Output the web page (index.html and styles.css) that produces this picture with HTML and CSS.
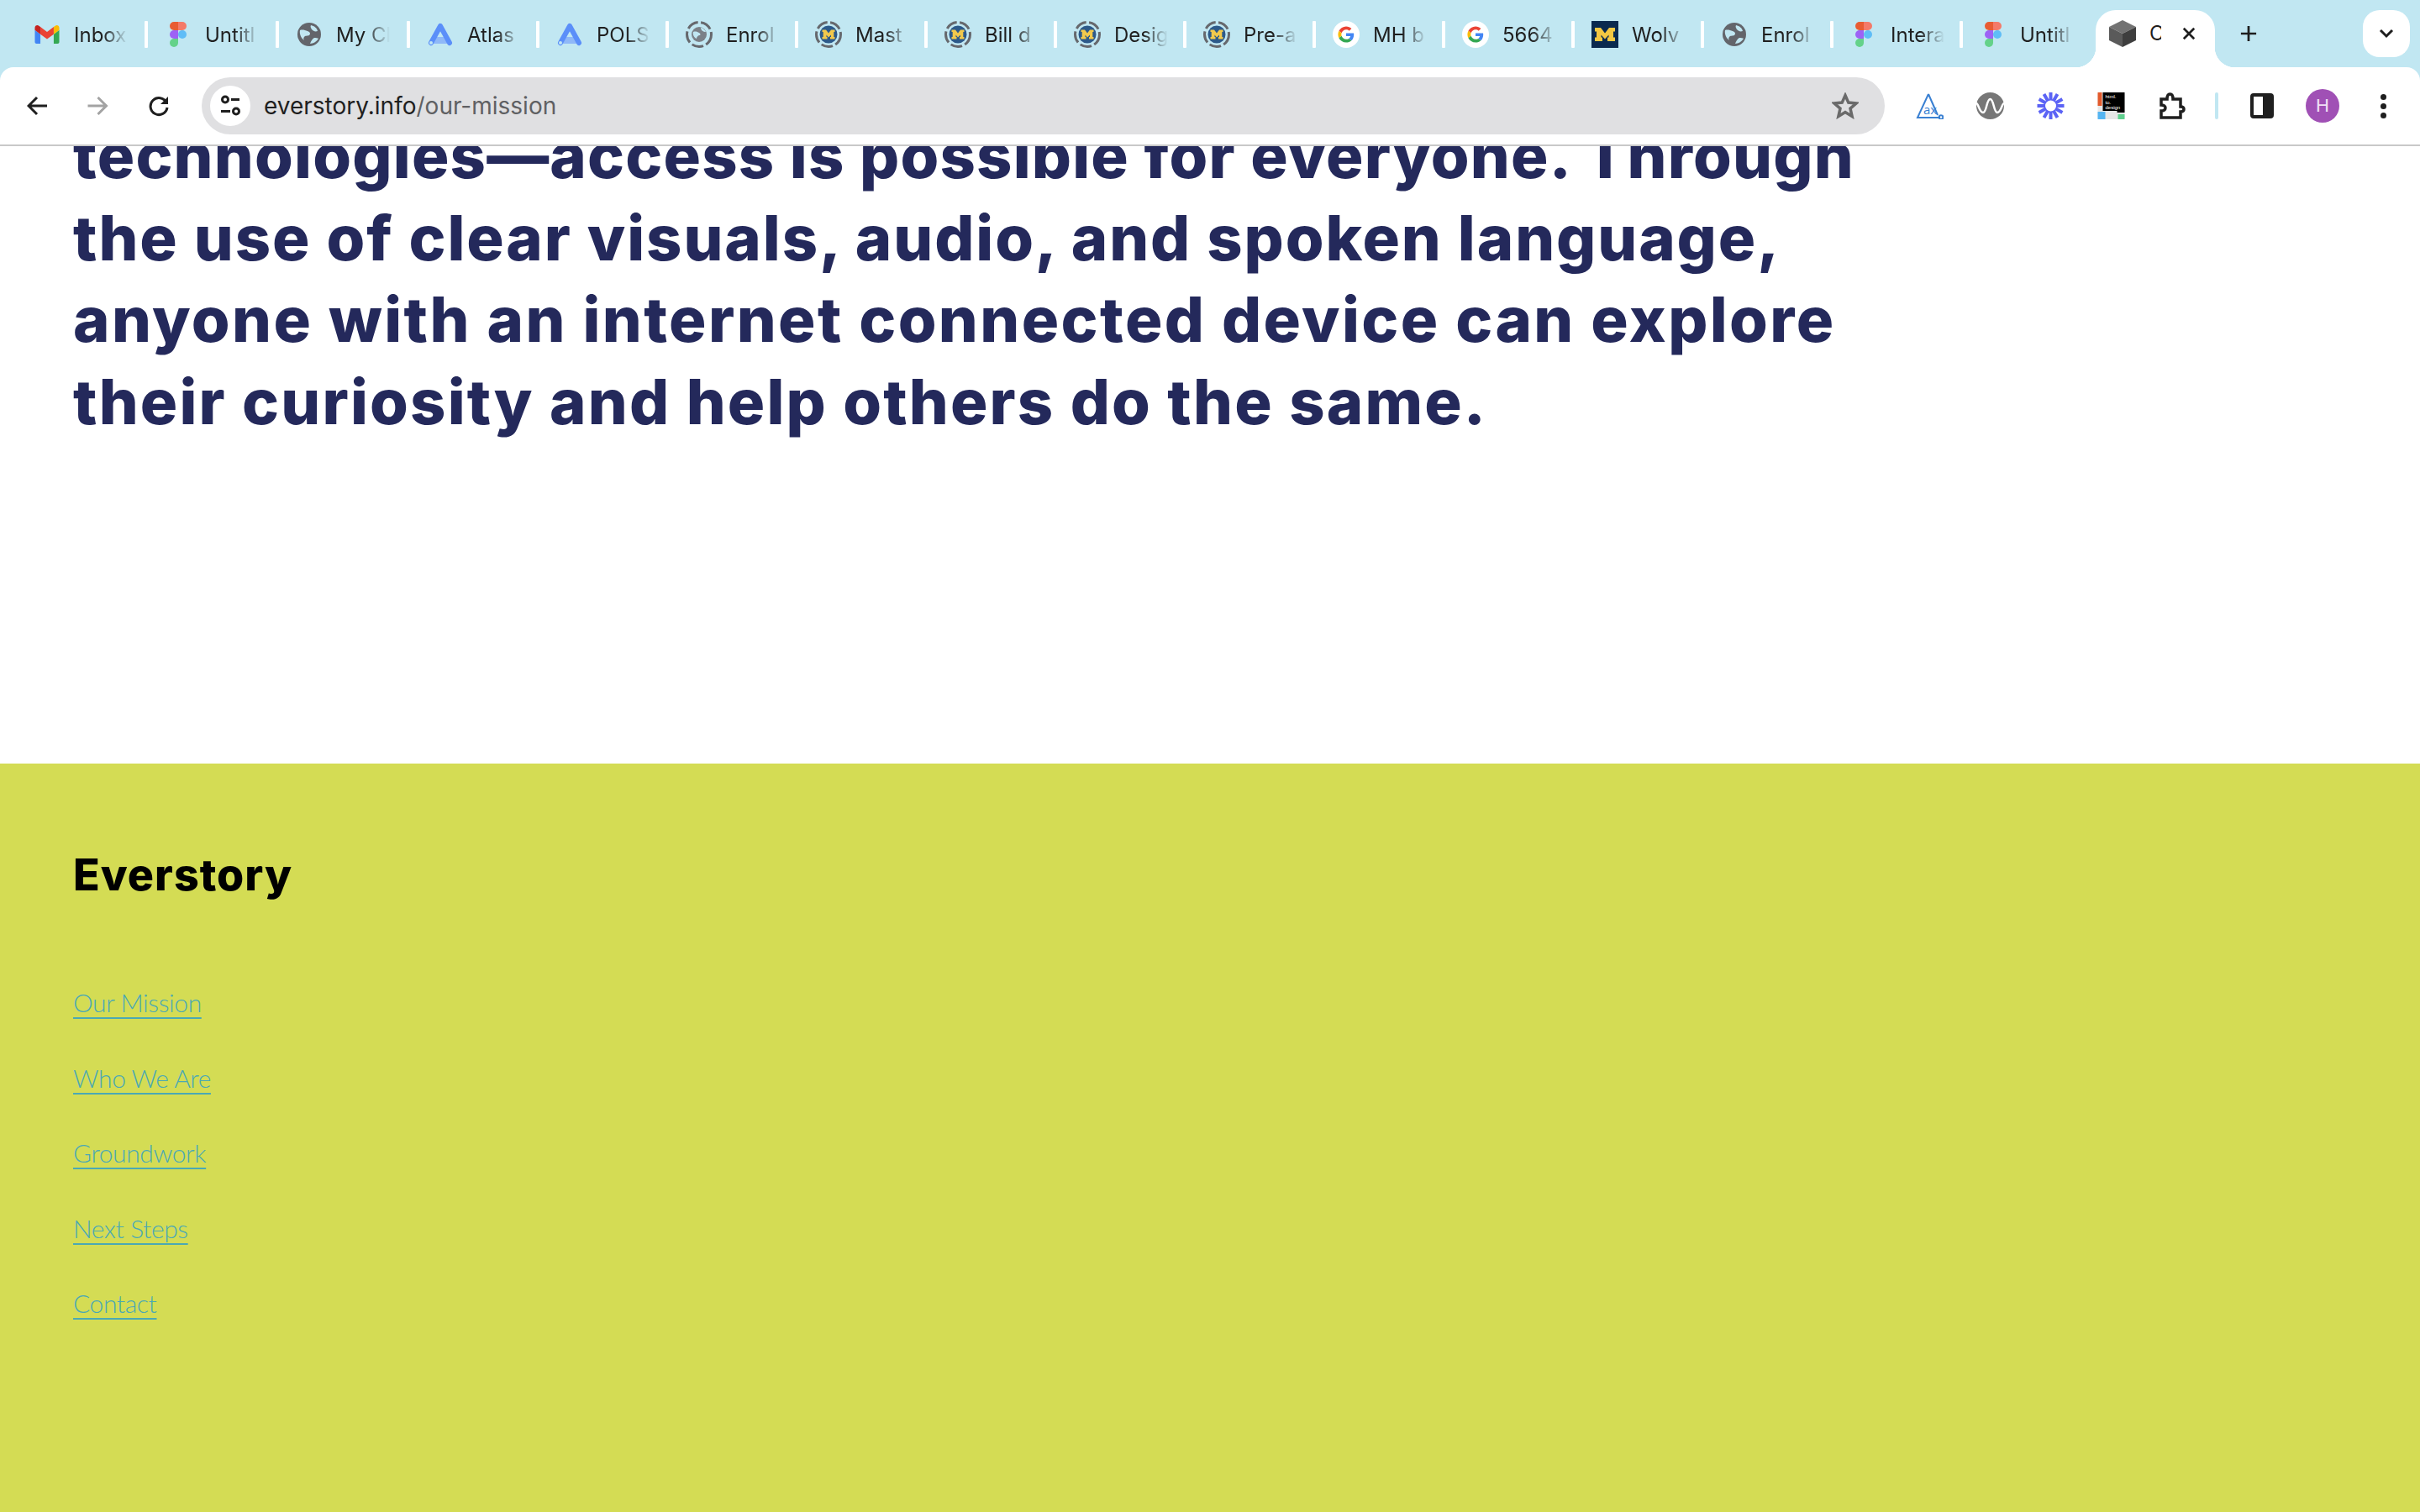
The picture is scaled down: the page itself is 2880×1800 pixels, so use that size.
FILE: index.html
```html
<!DOCTYPE html>
<html lang="en">
<head>
  <meta charset="UTF-8" />
  <title>Our Mission</title>
  <link rel="stylesheet" href="styles.css">
</head>
<body>

  <!-- shared favicons -->
  <svg class="defs" width="0" height="0">
    <symbol id="i-gmail" viewBox="47.500 26.500 97 97">
      <path fill="#4285f4" d="M58 108h14V74L52 59v43c0 3.32 2.69 6 6 6"/>
      <path fill="#34a853" d="M120 108h14c3.32 0 6-2.69 6-6V59l-20 15"/>
      <path fill="#fbbc04" d="M120 48v26l20-15v-8c0-7.42-8.47-11.65-14.4-7.2"/>
      <path fill="#ea4335" d="M72 74V48l24 18 24-18v26L96 92"/>
      <path fill="#c5221f" d="M52 51v8l20 15V48l-5.6-4.2c-5.94-4.45-14.4-.22-14.4 7.2"/>
    </symbol>
    <symbol id="i-figma" viewBox="-6 -1 32 32">
      <path fill="#64d28a" d="M5 30a5 5 0 0 0 5-5v-5H5a5 5 0 0 0 0 10z"/>
      <path fill="#9d62f5" d="M0 15a5 5 0 0 1 5-5h5v10H5a5 5 0 0 1-5-5z"/>
      <path fill="#e85c33" d="M0 5a5 5 0 0 1 5-5h5v10H5a5 5 0 0 1-5-5z"/>
      <path fill="#f47a69" d="M10 0h5a5 5 0 0 1 0 10h-5z"/>
      <circle fill="#5fbdf7" cx="15" cy="15" r="5"/>
    </symbol>
    <symbol id="i-globe" viewBox="-2 -2 32 32">
      <circle cx="14" cy="14" r="14" fill="#63656b"/>
      <path fill="#c1e7f2" d="M3 9c3-1 6 0 9 1 3 1 4 3 2 5-2 1-5 0-6 2-1 1-1 3 0 4-3-2-6-7-5-12z"/>
      <path fill="#c1e7f2" d="M16 3c4 1 7 3 8 7-3 1-5 0-7-2-1-2-2-3-1-5z"/>
      <path fill="#c1e7f2" d="M15 25c1-3 3-6 5-7 2 0 4 0 5 1-2 3-6 6-10 6z"/>
    </symbol>
    <symbol id="i-atlas" viewBox="-1 -1 32 32">
      <path fill="#8fb8f8" d="M6 18h18l4 8H2z"/>
      <path fill="none" stroke="#5b8ff9" stroke-width="6" stroke-linecap="round" stroke-linejoin="round" d="M4 25 15 5l11 20"/>
      <circle cx="4" cy="25" r="2" fill="#c1e7f2"/>
    </symbol>
    <symbol id="i-ring-globe" viewBox="0 0 32 32">
      <circle cx="16" cy="16" r="14.5" fill="none" stroke="#66686d" stroke-width="3" stroke-dasharray="14 3.5"/>
      <circle cx="16" cy="16" r="9" fill="#7b8087"/>
      <path fill="#c1e7f2" d="M9 13c3-1 5 0 7 1 2 1 2 3 0 3-2 1-3 2-3 4-3-1-5-5-4-8zM18 8c2 0 5 2 6 5-3 0-6-2-6-5z"/>
    </symbol>
    <symbol id="i-ring-m" viewBox="0 0 32 32">
      <circle cx="16" cy="16" r="14.5" fill="none" stroke="#66686d" stroke-width="3" stroke-dasharray="14 3.5"/>
      <circle cx="16" cy="16" r="10.5" fill="#2d5a8a"/>
      <path fill="#f2c94c" d="M8.5 10.5h4.5l3 4 3-4h4.500v2.500h-1.200v6h1.200v2.500h-5.500V19h1v-2.500L16 19.500l-2.500-3V19h1v2.500H8.500V19h1.200v-6H8.500z"/>
    </symbol>
    <symbol id="i-google" viewBox="-16 -16 80 80">
      <circle cx="24" cy="24" r="40" fill="#fff"/>
      <path fill="#EA4335" d="M24 9.5c3.54 0 6.71 1.22 9.21 3.6l6.85-6.85C35.9 2.38 30.47 0 24 0 14.62 0 6.51 5.38 2.56 13.22l7.98 6.19C12.43 13.72 17.74 9.5 24 9.5z"/>
      <path fill="#4285F4" d="M46.98 24.55c0-1.57-.15-3.09-.38-4.55H24v9.02h12.94c-.58 2.96-2.26 5.48-4.78 7.18l7.73 6c4.51-4.18 7.09-10.36 7.09-17.65z"/>
      <path fill="#FBBC05" d="M10.53 28.59c-.48-1.45-.76-2.99-.76-4.59s.27-3.14.76-4.59l-7.98-6.19C.92 16.46 0 20.12 0 24c0 3.88.92 7.54 2.56 10.78l7.97-6.19z"/>
      <path fill="#34A853" d="M24 48c6.48 0 11.93-2.13 15.89-5.81l-7.73-6c-2.15 1.45-4.92 2.3-8.16 2.3-6.26 0-11.57-4.22-13.47-9.91l-7.98 6.19C6.51 42.62 14.62 48 24 48z"/>
    </symbol>
    <symbol id="i-wolv" viewBox="0 0 32 32">
      <rect width="32" height="32" fill="#0b2a4f"/>
      <path fill="#f5c842" d="M4 8h7l5 6.500L21 8h7v4.500h-2v7h2V24h-9v-4.500h1.500v-3L16 21.500l-4.500-5v3H13V24H4v-4.500h2v-7H4z"/>
    </symbol>
    <symbol id="i-cube" viewBox="0 0 32 32">
      <path fill="#727272" d="M16 0 32 8 16 16 0 8z"/>
      <path fill="#5a5a5a" d="M0 8l16 8v16L0 24z"/>
      <path fill="#3e3e3e" d="M32 8 16 16v16l16-8z"/>
    </symbol>
  </svg>

  <div class="tabstrip">
    <div class="tab"><svg class="favicon"><use href="#i-gmail"/></svg><span class="tab-label">Inbox</span></div>
    <div class="tab wide"><svg class="favicon"><use href="#i-figma"/></svg><span class="tab-label">Untitl</span></div>
    <div class="tab wide"><svg class="favicon"><use href="#i-globe"/></svg><span class="tab-label">My Cl</span></div>
    <div class="tab"><svg class="favicon"><use href="#i-atlas"/></svg><span class="tab-label">Atlas</span></div>
    <div class="tab"><svg class="favicon"><use href="#i-atlas"/></svg><span class="tab-label">POLS</span></div>
    <div class="tab"><svg class="favicon"><use href="#i-ring-globe"/></svg><span class="tab-label">Enrol</span></div>
    <div class="tab"><svg class="favicon"><use href="#i-ring-m"/></svg><span class="tab-label">Mast</span></div>
    <div class="tab"><svg class="favicon"><use href="#i-ring-m"/></svg><span class="tab-label">Bill d</span></div>
    <div class="tab"><svg class="favicon"><use href="#i-ring-m"/></svg><span class="tab-label">Desig</span></div>
    <div class="tab"><svg class="favicon"><use href="#i-ring-m"/></svg><span class="tab-label">Pre-a</span></div>
    <div class="tab"><svg class="favicon"><use href="#i-google"/></svg><span class="tab-label">MH b</span></div>
    <div class="tab"><svg class="favicon"><use href="#i-google"/></svg><span class="tab-label">5664</span></div>
    <div class="tab"><svg class="favicon"><use href="#i-wolv"/></svg><span class="tab-label">Wolv</span></div>
    <div class="tab"><svg class="favicon"><use href="#i-globe"/></svg><span class="tab-label">Enrol</span></div>
    <div class="tab"><svg class="favicon"><use href="#i-figma"/></svg><span class="tab-label">Intera</span></div>
    <div class="tab"><svg class="favicon"><use href="#i-figma"/></svg><span class="tab-label">Untitl</span></div>
    <div class="tab-active">
      <svg class="favicon"><use href="#i-cube"/></svg>
      <span class="tab-label-active">C</span>
      <svg class="tab-close" viewBox="0 0 18 18"><path d="M2 2l14 14M16 2 2 16"/></svg>
    </div>
    <svg class="new-tab" viewBox="0 0 22 22"><path d="M11 1v20M1 11h20"/></svg>
    <div class="tab-search"><svg viewBox="0 0 18 12"><path d="M2 2l7 7 7-7"/></svg></div>
  </div>

  <div class="toolbar">
    <button class="tool"><svg class="stroke-dark" viewBox="0 0 26 26"><path d="M24 13H3M12 3 2 13l10 10"/></svg></button>
    <button class="tool"><svg class="stroke-grey" viewBox="0 0 26 26"><path d="M0.500 13h21M12.500 3l10 10-10 10"/></svg></button>
    <button class="tool"><svg class="stroke-dark" viewBox="0 0 26 26"><path d="M22 9a10 10 0 1 0 1 6"/><path class="solid" d="M24 2v9h-9z"/></svg></button>

    <div class="omnibox">
      <span class="site-chip">
        <svg viewBox="0 0 26 26"><circle cx="7" cy="5.500" r="3.500"/><path d="M14 5.500h10M2 19.500h11"/><circle cx="20" cy="19.500" r="3.500"/></svg>
      </span>
      <span class="url"><span class="url-host">everstory.info</span>/our-mission</span>
      <svg class="bookmark" viewBox="0 0 32 32"><path d="M16 3.500l3.800 8.600 9.200.9-7 6.200 2.100 9.300L16 23.500l-8.100 5 2.100-9.300-7-6.200 9.200-.9z"/></svg>
    </div>

    <button class="tool">
      <svg class="ext" viewBox="0 0 33 32">
        <path class="ax-tri" d="M15 2 2 30h27"/><path class="ax-tri" d="M15 2l11 25"/>
        <circle class="ax-tri" cx="30" cy="29.500" r="2.300"/>
        <text class="ax-text" x="9" y="26">ax</text>
      </svg>
    </button>
    <button class="tool">
      <svg class="ext" viewBox="0 0 33 32">
        <ellipse cx="16.500" cy="16" rx="16.500" ry="16" fill="#777"/>
        <path class="wave" d="M0 13c2.500 0 3.500 11 8 11s4-16 8.500-16 4 16 8.500 16 5.500-11 8-11"/>
      </svg>
    </button>
    <button class="tool">
      <svg class="ext" viewBox="0 0 32 32">
        <g class="burst"><path d="M16 0v32M0 16h32M2.100 8l27.800 16M8 2.100l16 27.800M24 2.100 8 29.900M29.900 8 2.100 24"/></g>
        <circle cx="16" cy="16" r="6.500" fill="#fff"/>
      </svg>
    </button>
    <button class="tool">
      <svg class="ext" viewBox="0 0 32 32">
        <rect width="32" height="32" rx="2" fill="#e6e6e6"/>
        <rect x="0" y="0" width="5" height="16" fill="#e35a2c"/>
        <rect x="0" y="23" width="9" height="9" fill="#55b5f2"/>
        <rect x="6" y="0" width="26" height="22" fill="#000"/>
        <rect x="24" y="26" width="8" height="6" fill="#5fd08e"/>
        <rect x="23" y="22" width="9" height="2" fill="#000"/>
        <text class="htd" x="9" y="7">html.</text>
        <text class="htd" x="9" y="13.500">to.</text>
        <text class="htd" x="9" y="20">design</text>
      </svg>
    </button>
    <button class="tool">
      <svg class="stroke-dark puzzle" viewBox="0 0 33 34"><path d="M4 9h7c0-4 1-6 3.500-6S18 5 18 9h9v9c3 0 4 1 4 3s-1 3-4 3v7H4v-8c3 0 5-1.500 5-3.500S7 16 4 16z"/></svg>
    </button>
    <span class="tool-sep"></span>
    <button class="tool">
      <svg class="panel" viewBox="0 0 28 30"><rect x="2" y="2" width="24" height="26" rx="2"/><path class="solid" d="M15 2h9a2 2 0 0 1 2 2v22a2 2 0 0 1-2 2h-9z"/></svg>
    </button>
    <button class="tool"><span class="avatar">H</span></button>
    <button class="tool"><span class="menu-dots"><i></i><i></i><i></i></span></button>
  </div>

  <main class="page">
    <h2 class="statement">
      <span class="line line-1">technologies—access is possible for everyone. Through</span>
      <span class="line line-2">the use of clear visuals, audio, and spoken language,</span>
      <span class="line line-3">anyone with an internet connected device can explore</span>
      <span class="line line-4">their curiosity and help others do the same.</span>
    </h2>
  </main>

  <footer class="site-footer">
    <div class="brand">Everstory</div>
    <nav class="footer-nav">
      <a href="#">Our Mission</a>
      <a href="#">Who We Are</a>
      <a href="#">Groundwork</a>
      <a href="#">Next Steps</a>
      <a href="#">Contact</a>
    </nav>
  </footer>

</body>
</html>
```

FILE: styles.css
```css
/* Global */
* {
  box-sizing: border-box;
}
html, body {
  margin: 0;
  padding: 0;
}
body {
  width: 2880px;
  height: 1800px;
  overflow: hidden;
  display: flex;
  flex-direction: column;
  background-color: #c1e7f2;
  font-family: Inter, "Liberation Sans", sans-serif;
  color: #1f1f1f;
}
.defs {
  position: absolute;
}

/* Tab strip */
.tabstrip {
  height: 80px;
  flex: none;
  display: flex;
  align-items: flex-start;
  padding-left: 22px;
}
.tab {
  width: 154px;
  height: 32px;
  margin-top: 25px;
  padding-left: 20px;
  display: flex;
  align-items: center;
  flex: none;
}
.tab.wide {
  width: 156px;
}
.tab:first-child {
  padding-left: 18px;
}
.tab::after {
  content: "";
  width: 4px;
  height: 32px;
  margin-left: auto;
  background-color: #fff;
  border-radius: 1px;
}
.tab:nth-child(16)::after {
  display: none;
}
.favicon {
  width: 32px;
  height: 32px;
  flex: none;
}
.tab-label {
  width: 64px;
  margin-left: 16px;
  font-size: 24px;
  white-space: nowrap;
  overflow: hidden;
  -webkit-mask-image: linear-gradient(to right, #000 55%, transparent 100%);
  mask-image: linear-gradient(to right, #000 55%, transparent 100%);
}

/* Active tab */
.tab-active {
  position: relative;
  width: 142px;
  height: 68px;
  margin-top: 12px;
  margin-left: 4px;
  padding: 12px 0 0 16px;
  display: flex;
  align-items: flex-start;
  flex: none;
  background-color: #fff;
  border-radius: 24px 24px 0 0;
}
.tab-active::before,
.tab-active::after {
  content: "";
  position: absolute;
  bottom: 0;
  width: 24px;
  height: 24px;
}
.tab-active::before {
  left: -24px;
  background: radial-gradient(circle at 0 0, #c1e7f2 24px, #fff 24.5px);
}
.tab-active::after {
  right: -24px;
  background: radial-gradient(circle at 100% 0, #c1e7f2 24px, #fff 24.5px);
}
.tab-label-active {
  width: 14px;
  margin-left: 16px;
  font-size: 24px;
  line-height: 32px;
  overflow: hidden;
}
.tab-close {
  width: 16px;
  height: 16px;
  margin: 8px 0 0 25px;
  fill: none;
  stroke: #1f1f1f;
  stroke-width: 3;
}
.new-tab {
  width: 20px;
  height: 20px;
  margin: 30px 0 0 30px;
  fill: none;
  stroke: #1f1f1f;
  stroke-width: 3;
}
.tab-search {
  width: 56px;
  height: 56px;
  margin: 12px 0 0 126px;
  display: flex;
  align-items: center;
  justify-content: center;
  background-color: #fff;
  border-radius: 20px;
}
.tab-search svg {
  width: 18px;
  height: 12px;
  fill: none;
  stroke: #1f1f1f;
  stroke-width: 3;
}

/* Toolbar */
.toolbar {
  height: 94px;
  flex: none;
  padding: 0 8px 0 8.5px;
  display: flex;
  align-items: center;
  background-color: #fff;
  border-bottom: 2px solid #c9c9c9;
  border-radius: 16px 16px 0 0;
}
.tool {
  width: 72px;
  height: 72px;
  padding: 0;
  flex: none;
  display: flex;
  align-items: center;
  justify-content: center;
  background: none;
  border: none;
}
.tool svg {
  width: 26px;
  height: 26px;
}
.stroke-dark,
.stroke-grey {
  fill: none;
  stroke-width: 3;
}
.stroke-dark {
  stroke: #1f1f1f;
}
.stroke-grey {
  stroke: #a3a3a3;
}
.stroke-dark .solid {
  fill: #1f1f1f;
  stroke: none;
}
.tool .ext {
  width: 33px;
  height: 32px;
}
.tool .puzzle {
  width: 33px;
  height: 34px;
  stroke-width: 3.500;
}
.ax-tri {
  fill: none;
  stroke: #3a80d2;
  stroke-width: 2;
}
.ax-text {
  font-family: "Open Sans", sans-serif;
  font-size: 15px;
  fill: #3a80d2;
}
.wave {
  fill: none;
  stroke: #fff;
  stroke-width: 2.500;
}
.burst {
  stroke: #5b63f5;
  stroke-width: 4;
}
.htd {
  font-family: "Liberation Sans", sans-serif;
  font-size: 6px;
  fill: #fff;
}
.tool-sep {
  width: 4px;
  height: 32px;
  margin: 0 16px;
  flex: none;
  background-color: #c1e7f2;
  border-radius: 2px;
}
.tool .panel {
  width: 28px;
  height: 30px;
  fill: none;
  stroke: #1f1f1f;
  stroke-width: 4;
}
.panel .solid {
  fill: #1f1f1f;
  stroke: none;
}
.avatar {
  width: 40px;
  height: 40px;
  display: flex;
  align-items: center;
  justify-content: center;
  border-radius: 50%;
  background-color: #a050b5;
  color: #f0e0f5;
  font-size: 22px;
  font-weight: 300;
}
.menu-dots {
  display: flex;
  flex-direction: column;
  gap: 4px;
}
.menu-dots i {
  width: 7px;
  height: 7px;
  border-radius: 50%;
  background-color: #1f1f1f;
}

/* Address bar */
.omnibox {
  height: 68px;
  flex: 1;
  margin: 0 17px 0 15.500px;
  padding: 0 31px 0 10px;
  display: flex;
  align-items: center;
  background-color: #e0e0e2;
  border-radius: 34px;
}
.site-chip {
  width: 48px;
  height: 48px;
  flex: none;
  display: flex;
  align-items: center;
  justify-content: center;
  border-radius: 50%;
  background-color: #fff;
}
.site-chip svg {
  width: 26px;
  height: 26px;
  fill: none;
  stroke: #1f1f1f;
  stroke-width: 3;
}
.url {
  margin-left: 16px;
  font-size: 28px;
  color: #5f6063;
}
.url-host {
  color: #1f1f1f;
}
.bookmark {
  width: 32px;
  height: 32px;
  margin-left: auto;
  fill: none;
  stroke: #6a6a6a;
  stroke-width: 3.500;
}

/* Page */
.page {
  height: 735px;
  flex: none;
  padding-left: 87px;
  overflow: hidden;
  background-color: #fff;
}
.statement {
  margin: -37px 0 0;
  font-size: 74px;
  font-weight: 800;
  line-height: 97.700px;
  white-space: nowrap;
  color: #24295b;
}
.line {
  display: block;
}
/* widths per line, the brand font is wider than what we have here */
.line-1 { letter-spacing: 1.2px; }
.line-2 { letter-spacing: 1.9px; }
.line-3 { letter-spacing: 2.4px; }
.line-4 { letter-spacing: 2.15px; }

/* Footer */
.site-footer {
  flex: 1;
  padding: 99px 0 0 87px;
  background-color: #d4dc54;
}
.brand {
  font-size: 52px;
  font-weight: 800;
  line-height: 68px;
  letter-spacing: 1px;
  color: #000;
}
.footer-nav {
  margin-top: 97px;
  display: flex;
  flex-direction: column;
  align-items: flex-start;
  gap: 49.500px;
}
.footer-nav a {
  font-family: Lato, sans-serif;
  font-size: 30px;
  font-weight: 300;
  line-height: 40px;
  letter-spacing: -0.4px;
  color: #4ba9b4;
  text-decoration: underline;
  text-decoration-thickness: 2px;
  text-underline-offset: 6px;
}
```
